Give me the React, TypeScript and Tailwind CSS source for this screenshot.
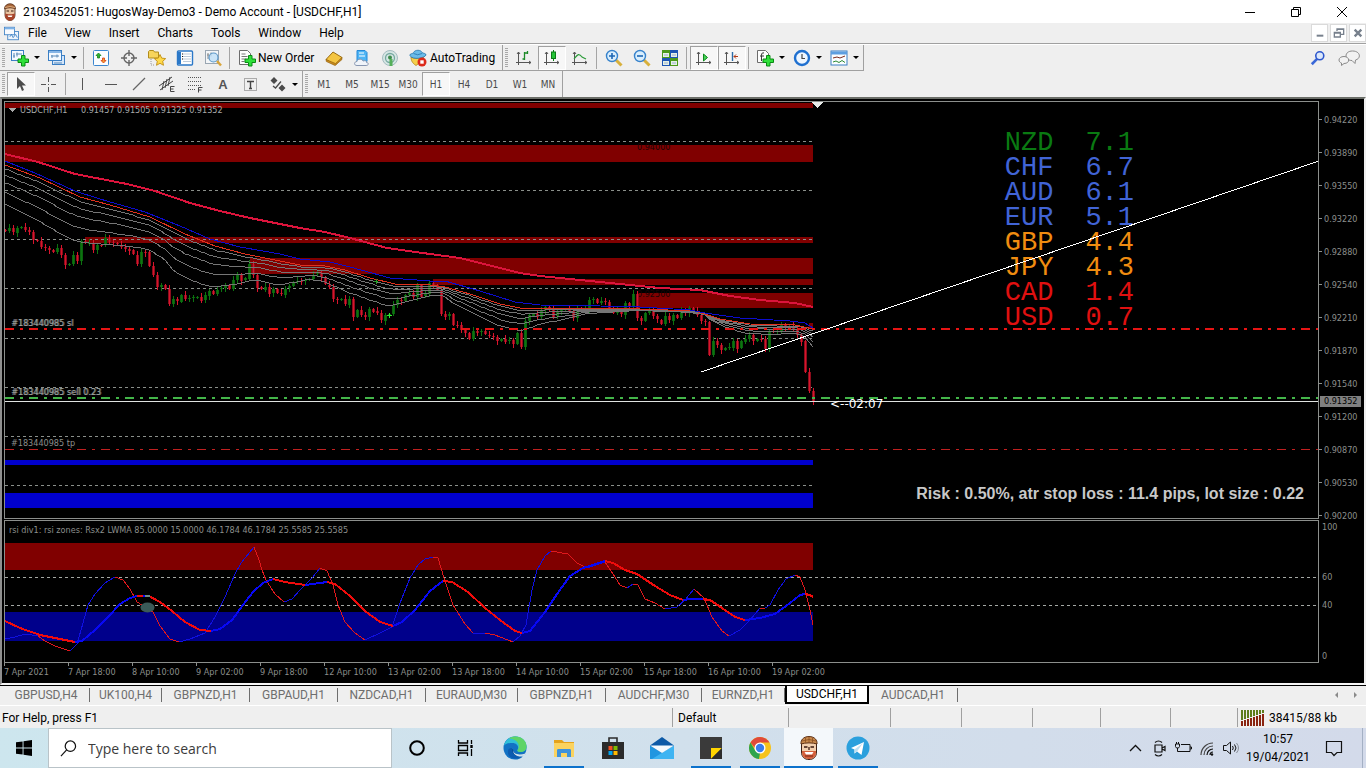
import type { ReactNode } from "react";
import { clsx } from "clsx";

type Point = [number, number];

interface Run {
  color: "red" | "blue";
  points: Point[];
}

const MENU = ["File", "View", "Insert", "Charts", "Tools", "Window", "Help"];
const TIMEFRAMES = ["M1", "M5", "M15", "M30", "H1", "H4", "D1", "W1", "MN"];

const PRICES = [
  "0.94220", "0.93890", "0.93550", "0.93220", "0.92880", "0.92540", "0.92210",
  "0.91870", "0.91540", "0.91200", "0.90870", "0.90530", "0.90200",
];

const TIMES = [
  "7 Apr 2021", "7 Apr 18:00", "8 Apr 10:00", "9 Apr 02:00", "9 Apr 18:00",
  "12 Apr 10:00", "13 Apr 02:00", "13 Apr 18:00", "14 Apr 10:00",
  "15 Apr 02:00", "15 Apr 18:00", "16 Apr 10:00", "19 Apr 02:00",
];

const STRENGTH = [
  { code: "NZD", value: "7.1", color: "text-[#0a7a12]" },
  { code: "CHF", value: "6.7", color: "text-[#4164d6]" },
  { code: "AUD", value: "6.1", color: "text-[#4164d6]" },
  { code: "EUR", value: "5.1", color: "text-[#4164d6]" },
  { code: "GBP", value: "4.4", color: "text-[#f08c10]" },
  { code: "JPY", value: "4.3", color: "text-[#f08c10]" },
  { code: "CAD", value: "1.4", color: "text-[#e01010]" },
  { code: "USD", value: "0.7", color: "text-[#e01010]" },
];

const TABS = [
  { name: "GBPUSD,H4", width: "w-[87px]" },
  { name: "UK100,H4", width: "w-[72px]" },
  { name: "GBPNZD,H1", width: "w-[88px]" },
  { name: "GBPAUD,H1", width: "w-[88px]" },
  { name: "NZDCAD,H1", width: "w-[88px]" },
  { name: "EURAUD,M30", width: "w-[92px]" },
  { name: "GBPNZD,H1", width: "w-[88px]" },
  { name: "AUDCHF,M30", width: "w-[96px]" },
  { name: "EURNZD,H1", width: "w-[83px]" },
  { name: "USDCHF,H1", width: "w-[84px]", active: true },
  { name: "AUDCAD,H1", width: "w-[89px]" },
];

// Hourly closes, one bar every 4px, in thirds of a pixel down from the chart window
const CLOSES = [
  400, 391, 403, 389, 387, 396, 403, 427, 430, 447, 449, 455, 461, 449, 470, 499, 497, 470, 489, 430,
  436, 435, 455, 440, 442, 421, 432, 436, 440, 446, 452, 457, 470, 497, 461, 463, 505, 532, 568, 562,
  574, 618, 603, 610, 590, 601, 600, 598, 596, 608, 592, 578, 587, 575, 571, 562, 573, 545, 530, 547,
  541, 497, 530, 568, 575, 566, 587, 574, 586, 590, 572, 565, 552, 548, 549, 546, 543, 530, 526, 538,
  560, 566, 603, 607, 604, 620, 603, 656, 635, 650, 657, 632, 640, 646, 668, 650, 648, 622, 606, 608,
  590, 585, 597, 560, 595, 588, 556, 561, 575, 647, 655, 648, 680, 682, 697, 705, 723, 698, 704, 700,
  710, 713, 717, 728, 722, 730, 727, 738, 706, 749, 670, 652, 647, 655, 635, 627, 635, 655, 640, 636,
  634, 640, 660, 630, 640, 635, 606, 604, 615, 610, 613, 630, 645, 640, 650, 614, 625, 588, 660, 668,
  645, 640, 655, 665, 678, 655, 668, 650, 660, 640, 645, 630, 640, 652, 670, 672, 772, 730, 742, 757,
  750, 748, 728, 752, 730, 722, 710, 728, 722, 722, 752, 700, 702, 700, 682, 690, 685, 695, 710, 730,
  822, 880, 912,
];

const SLOW_MA: Point[] = [
  [5, 154], [38, 162], [75, 174], [127, 184], [155, 191], [190, 203], [220, 211], [250, 218],
  [280, 224], [300, 228], [325, 232], [350, 238], [387, 248], [430, 254], [460, 258], [480, 263],
  [520, 273], [540, 276], [600, 282], [660, 288], [700, 290], [730, 296], [760, 300], [795, 303],
  [813, 307],
];

const BLUE_MA: Point[] = [
  [5, 161], [35, 173], [75, 191], [100, 199], [145, 212], [180, 226], [210, 239], [240, 247],
  [280, 254], [300, 259], [330, 262], [350, 267], [390, 278], [430, 281], [445, 281], [480, 291],
  [515, 302], [540, 305], [600, 306], [640, 307], [690, 310], [705, 313], [740, 318], [790, 321],
  [805, 323], [813, 328],
];

const FAN_TOP: Point[] = [
  [5, 165], [40, 178], [80, 197], [110, 205], [150, 217], [185, 234], [215, 246], [245, 254],
  [280, 261], [300, 265], [325, 266], [345, 270], [370, 278], [395, 284], [430, 285], [445, 287],
  [470, 294], [500, 304], [520, 308], [560, 308], [640, 309], [695, 311], [720, 319], [750, 324],
  [795, 325], [813, 329],
];

const FAN_BOTTOM: Point[] = [
  [5, 204], [35, 219], [70, 239], [82, 242], [130, 246], [150, 250], [165, 260], [175, 272],
  [190, 280], [212, 287], [235, 284], [255, 280], [265, 282], [280, 285], [310, 279], [325, 282],
  [350, 293], [385, 305], [395, 305], [420, 298], [440, 294], [455, 304], [480, 317], [500, 326],
  [520, 331], [535, 326], [545, 323], [570, 318], [590, 313], [640, 310], [690, 312], [705, 315],
  [710, 320], [725, 327], [745, 333], [770, 334], [795, 333], [805, 337], [813, 347],
];

const RSI_FAST: Run[] = [
  { color: "blue", points: [[5, 639], [15, 637], [25, 634], [38, 636]] },
  { color: "red", points: [[38, 636], [45, 641], [55, 646], [70, 651]] },
  { color: "blue", points: [[70, 651], [77, 644], [83, 623], [88, 605], [95, 594], [105, 583], [115, 577]] },
  { color: "red", points: [[115, 577], [123, 580], [130, 589], [137, 602], [147, 608], [153, 612], [160, 626], [170, 639], [179, 642]] },
  { color: "blue", points: [[179, 642], [190, 639], [205, 633], [215, 617], [225, 597], [235, 574], [241, 563], [254, 547]] },
  { color: "red", points: [[254, 547], [259, 560], [262, 570], [266, 580], [275, 594], [284, 602]] },
  { color: "blue", points: [[284, 602], [292, 599], [300, 590], [312, 578], [320, 568]] },
  { color: "red", points: [[320, 568], [327, 571], [333, 585], [338, 605], [345, 622], [355, 633], [365, 640]] },
  { color: "blue", points: [[365, 640], [380, 633], [392, 627], [400, 603], [410, 578], [418, 565], [425, 559], [433, 557]] },
  { color: "red", points: [[433, 557], [438, 558], [444, 578], [453, 605], [465, 624], [473, 633]] },
  { color: "blue", points: [[473, 633], [485, 633]] },
  { color: "red", points: [[485, 633], [495, 635], [513, 642]] },
  { color: "blue", points: [[513, 642], [520, 636], [526, 625], [532, 590], [537, 570], [545, 556], [551, 551]] },
  { color: "red", points: [[551, 551], [568, 554], [577, 563], [587, 568]] },
  { color: "blue", points: [[587, 568], [605, 562]] },
  { color: "red", points: [[605, 562], [613, 574], [620, 585], [627, 588]] },
  { color: "blue", points: [[627, 588], [633, 584]] },
  { color: "red", points: [[633, 584], [638, 585], [645, 599], [655, 603], [665, 609]] },
  { color: "blue", points: [[665, 609], [677, 607], [685, 600], [694, 589]] },
  { color: "red", points: [[694, 589], [704, 598], [712, 617], [722, 631], [729, 636]] },
  { color: "blue", points: [[729, 636], [740, 630], [750, 620], [760, 608]] },
  { color: "red", points: [[760, 608], [765, 608]] },
  { color: "blue", points: [[765, 608], [770, 605], [778, 590], [786, 579], [795, 575]] },
  { color: "red", points: [[795, 575], [800, 577], [805, 590], [810, 610], [813, 625]] },
];

const RSI_SLOW: Run[] = [
  { color: "red", points: [[5, 621], [20, 628], [40, 635], [60, 639], [75, 642]] },
  { color: "blue", points: [[75, 642], [82, 641], [95, 630], [108, 617], [120, 604], [130, 598], [137, 596]] },
  { color: "red", points: [[137, 596], [143, 596]] },
  { color: "blue", points: [[143, 596], [149, 596]] },
  { color: "red", points: [[149, 596], [160, 602], [172, 611], [185, 622], [200, 630], [211, 631]] },
  { color: "blue", points: [[211, 631], [220, 629], [232, 620], [243, 605], [253, 592], [263, 583], [273, 579]] },
  { color: "red", points: [[273, 579], [285, 582], [305, 585]] },
  { color: "blue", points: [[305, 585], [320, 583], [327, 582]] },
  { color: "red", points: [[327, 582], [335, 584], [350, 596], [365, 611], [380, 622], [393, 626]] },
  { color: "blue", points: [[393, 626], [402, 622], [415, 610], [430, 591], [443, 581]] },
  { color: "red", points: [[443, 581], [452, 582], [468, 592], [485, 608], [500, 620], [515, 631], [522, 633]] },
  { color: "blue", points: [[522, 633], [530, 631], [545, 612], [557, 594], [570, 576], [583, 568], [605, 561]] },
  { color: "red", points: [[605, 561], [613, 563], [625, 570], [637, 574], [655, 586], [670, 595], [683, 600]] },
  { color: "blue", points: [[683, 600], [692, 599], [703, 599]] },
  { color: "red", points: [[703, 599], [710, 600], [722, 608], [735, 617], [745, 620]] },
  { color: "blue", points: [[745, 620], [760, 618], [775, 614], [790, 603], [800, 595], [805, 594]] },
  { color: "red", points: [[805, 594], [810, 595], [813, 597]] },
];

const join = (points: Point[]) => points.map((p) => p.join(",")).join(" ");

function valueAt(points: Point[], x: number) {
  const i = Math.max(1, points.findIndex((p) => p[0] >= x));
  const [x0, y0] = points[i - 1];
  const [x1, y1] = points[i];
  return y0 + ((y1 - y0) * (x - x0)) / (x1 - x0);
}

function between(ratio: number): Point[] {
  const out: Point[] = [];
  for (let x = 5; x <= 813; x += 4) {
    const top = valueAt(FAN_TOP, x);
    out.push([x, Math.round(top + (valueAt(FAN_BOTTOM, x) - top) * ratio)]);
  }
  return out;
}

function Candles() {
  return (
    <>
      {CLOSES.map((c, i) => {
        const open = 98 + (i === 0 ? 396 : CLOSES[i - 1]) / 3;
        const close = 98 + c / 3;
        const up = close < open;
        const top = Math.round(Math.min(open, close));
        const height = Math.max(1, Math.round(Math.abs(open - close)));
        const above = 1 + ((i * 7) % 4);
        const below = 1 + ((i * 5) % 4);
        const x = 5 + i * 4;
        return (
          <g key={i}>
            <rect x={x - 1} y={top} width={3} height={height} fill={up ? "#0a620c" : "#8c0d1c"} />
            <rect x={x} y={top - above} width={1} height={height + above + below} fill={up ? "#0c7410" : "#d8142c"} />
          </g>
        );
      })}
    </>
  );
}

/* ---------- main price pane ---------- */

function PricePlot() {
  return (
    <svg className="absolute inset-0 h-full w-full overflow-hidden" shapeRendering="crispEdges" aria-label="USDCHF price">
      <g transform="translate(-5 -102)">
        <g fill="#800000">
          <rect x={5} y={103} width={808} height={5} />
          <rect x={5} y={145} width={808} height={17} />
          <rect x={85} y={237} width={728} height={6} />
          <rect x={250} y={258} width={563} height={16} />
          <rect x={433} y={279} width={380} height={6} />
          <rect x={637} y={293} width={176} height={15} />
          <rect x={809} y={323} width={4} height={6} />
        </g>
        <g fill="#0000cd">
          <rect x={5} y={460} width={808} height={5} />
          <rect x={5} y={493} width={808} height={15} />
        </g>
        <g fill="#1c0404" fontSize={9} fontFamily="'DejaVu Sans Condensed', 'DejaVu Sans', sans-serif">
          <text x={637} y={150}>0.94000</text>
          <text x={637} y={297}>0.92500</text>
        </g>
        <g stroke="#8a8f8a" strokeDasharray="3 3">
          {[141, 190, 239, 288, 338, 387, 436, 485].map((y) => (
            <line key={y} x1={5} x2={813} y1={y + 0.5} y2={y + 0.5} />
          ))}
        </g>
        <Candles />
        <g fill="none">
          {[0.1, 0.26, 0.45, 0.7, 1].map((r) => (
            <polyline key={r} points={join(between(r))} stroke="#757575" />
          ))}
          <polyline points={join(FAN_TOP)} stroke="#e0301c" />
          <polyline points={join(BLUE_MA)} stroke="#0c0cd0" />
          <polyline points={join(SLOW_MA)} stroke="#dc143c" strokeWidth={2} />
        </g>
        <path d="M387 315.500h5M389.500 313v5" stroke="#32e632" />
        <path d="M374 281.500h4M376.500 279v5" stroke="#22a022" />
        <line x1={5} x2="120%" y1={329} y2={329} stroke="#e81414" strokeWidth={2} strokeDasharray="9 6 3 6" />
        <line x1={5} x2="120%" y1={398} y2={398} stroke="#43b649" strokeWidth={2} strokeDasharray="9 6 3 6" />
        <line x1={5} x2="120%" y1={401.5} y2={401.5} stroke="#dfe2e0" />
        <line x1={5} x2="120%" y1={449.5} y2={449.5} stroke="#c02020" strokeDasharray="9 6 3 6" />
        <line x1={701} y1={372} x2={1319} y2={161} stroke="#ffffff" />
        <path d="M812 102h11l-5.500 6z" fill="#e8ecea" />
        <path d="M8 108h8l-4 4z" fill="#a9a9a9" />
      </g>
    </svg>
  );
}

function PricePane() {
  return (
    <div className="flex">
      <div className="relative h-[418px] flex-1 border border-[#8c8f8c]">
        <table className="absolute top-[29px] right-[184px] font-['Liberation_Mono',monospace] text-[27px] leading-[25px]">
          <tbody>
            {STRENGTH.map((s) => (
              <tr key={s.code} className={clsx("h-[25px]", s.color)}>
                <th scope="row" className="p-0 pr-8 font-normal">{s.code}</th>
                <td className="p-0">{s.value}</td>
              </tr>
            ))}
          </tbody>
        </table>
        <PricePlot />
        <p className="absolute top-[2px] left-[15px] flex text-[#a9a9a9]">
          <span className="w-[61px]">USDCHF,H1</span>
          <span>0.91457 0.91505 0.91325 0.91352</span>
        </p>
        <p className="absolute top-[215px] left-[6px] text-[#a0a4a0] [text-shadow:1px_0_#6c706c]">#183440985 sl</p>
        <p className="absolute top-[284px] left-[6px] text-[#a0a4a0] [text-shadow:1px_0_#6c706c]">#183440985 sell 0.23</p>
        <p className="absolute top-[335px] left-[6px] text-[#8c8f8c]">#183440985 tp</p>
        <p className="absolute top-[294px] left-[825px] font-['DejaVu_Sans',sans-serif] text-xs leading-4 text-white">&lt;--02:07</p>
        <p className="absolute right-[14px] bottom-[14px] font-['Liberation_Sans',Arial,sans-serif] text-base leading-5 font-bold text-[#c8c8c8]">
          Risk : 0.50%, atr stop loss : 11.4 pips, lot size : 0.22
        </p>
      </div>
      <div className="relative w-[45px] text-[#8c8f8c]">
        <ul className="flex h-[418px] flex-col pt-[2px]">
          {PRICES.map((p) => (
            <li key={p} className="flex h-[33px] shrink-0 items-center gap-[2px] before:h-px before:w-[3px] before:bg-[#8c8f8c]">
              {p}
            </li>
          ))}
        </ul>
        <span className="absolute top-[295px] left-px h-[11px] bg-[#808080] px-1 leading-[11px] text-black">0.91352</span>
      </div>
    </div>
  );
}

/* ---------- rsi pane ---------- */

function RsiPane() {
  return (
    <div className="mt-px flex">
      <div className="relative h-[143px] flex-1 border border-[#8c8f8c]">
        <svg className="absolute inset-0 h-full w-full overflow-hidden" shapeRendering="crispEdges" aria-label="RSI zones">
          <g transform="translate(-5 -521)">
            <rect x={5} y={543} width={808} height={27} fill="#800000" />
            <rect x={5} y={612} width={808} height={29} fill="#00008b" />
            <g stroke="#a4a8a4" strokeDasharray="3 3">
              <line x1={5} x2="120%" y1={577.5} y2={577.5} />
              <line x1={5} x2="120%" y1={605.5} y2={605.5} />
            </g>
            <g fill="none">
              {RSI_FAST.map((r, i) => (
                <polyline key={i} points={join(r.points)} stroke={r.color === "red" ? "#e0181c" : "#1010e0"} />
              ))}
              {RSI_SLOW.map((r, i) => (
                <polyline key={i} points={join(r.points)} stroke={r.color === "red" ? "#f00c0c" : "#0808f4"} strokeWidth={2} />
              ))}
            </g>
            <path d="M145 596h5" stroke="#6f8a8a" strokeWidth={2} />
            <ellipse cx={147.5} cy={607.5} rx={7} ry={5} fill="#3a5a58" shapeRendering="auto" />
          </g>
        </svg>
        <p className="absolute top-[3px] left-1 text-[#8c8f8c]">
          rsi div1: rsi zones: Rsx2 LWMA 85.0000 15.0000 46.1784 46.1784 25.5585 25.5585
        </p>
      </div>
      <ul className="w-[45px] pt-px pl-[3px] text-[#8c8f8c]">
        <li>100</li>
        <li className="pt-[38px]">60</li>
        <li className="pt-4">40</li>
        <li className="pt-[39px]">0</li>
      </ul>
    </div>
  );
}

function Chart() {
  return (
    <main className="flex-1 border-2 border-t-[#6b6e68] border-r-[#efefef] border-b-[#f6f6f6] border-l-[#8f8f8f] bg-black pt-[2px] pl-[2px] font-['DejaVu_Sans_Condensed','DejaVu_Sans',sans-serif] text-[9px] leading-3">
      <PricePane />
      <RsiPane />
      <ol className="flex h-[20px] text-[#8c8f8c]">
        {TIMES.map((t) => (
          <li key={t} className="flex w-16 shrink-0 flex-col whitespace-nowrap before:h-[3px] before:w-px before:bg-[#8c8f8c]">
            {t}
          </li>
        ))}
      </ol>
    </main>
  );
}

/* ---------- icons ---------- */

function Icon({ children, size = "h-[18px] w-[18px]" }: { children: ReactNode; size?: string }) {
  return (
    <svg viewBox="0 0 18 18" className={clsx("shrink-0", size)} fill="none" aria-hidden="true">
      {children}
    </svg>
  );
}

const Plus = () => <path d="M10.500 6.500h3.500v3.500h3.500v3.500H14V17h-3.500v-3.500H7V10h3.500z" fill="#2fe03a" stroke="#0a8a14" />;

const Hugo = ({ size }: { size?: string }) => (
  <Icon size={size}>
    <path d="M4 5c0-5 10-5 10 0v7c0 3-2 5.500-5 5.500S4 15 4 12z" fill="#e9c4a2" stroke="#4a2413" strokeWidth=".8" />
    <path d="M3.500 6c0-7 11-7 11 0-3-1.500-8-1.500-11 0z" fill="#a8663a" stroke="#4a2614" strokeWidth=".6" />
    <path d="M4 4.500q5-2 10 0" stroke="#d9a878" />
    <path d="M4.200 10.500c1.500 1 8 1 9.600 0v2c0 3-2 5-4.800 5s-4.800-2-4.800-5z" fill="#a8432a" />
    <path d="M6.500 12.500h5l-.8 1.500H7.300z" fill="#fff" />
    <path d="M5.500 8h2.500M10 8h2.500" stroke="#3a1a10" strokeWidth="1.200" />
  </Icon>
);

const ICONS = {
  newChart: (
    <Icon>
      <rect x=".5" y="1.500" width="12" height="10" fill="#f4f9ff" stroke="#3b7fc4" />
      <path d="M3 4v5M2 7h2M6 3.500v4M5 5h6" stroke="#5a8ab8" />
      <Plus />
    </Icon>
  ),
  profiles: (
    <Icon>
      <rect x="4.500" y="6.500" width="12" height="9" fill="#d4e6fa" stroke="#3b7fc4" />
      <rect x=".5" y="1.500" width="13" height="10" fill="#f4f9ff" stroke="#3b7fc4" />
      <path d="M1 3h12" stroke="#86b5e6" strokeWidth="2" />
      <path d="M3 7h8M4 6v3M9 5.500v3M6 14h8" stroke="#5a8ab8" />
    </Icon>
  ),
  market: (
    <Icon>
      <rect x="1.500" y="1.500" width="15" height="15" rx="1" fill="#fbfdff" stroke="#3b86cf" />
      <path d="M6.500 4l2.500 2.500H7.500V9h-2V6.500H4z" fill="#2fb52f" stroke="#14801a" strokeWidth=".8" />
      <path d="M11.500 14L9 11.500h1.500V9h2v2.500H14z" fill="#f4a035" stroke="#d8380c" strokeWidth=".8" />
    </Icon>
  ),
  target: (
    <Icon>
      <circle cx="9" cy="9" r="5" stroke="#666" strokeWidth="1.400" />
      <path d="M9 1v6M9 11v6M1 9h6M11 9h6" stroke="#666" strokeWidth="1.400" />
    </Icon>
  ),
  star: (
    <Icon>
      <path d="M.5 2.500l1-1h4l1 1.500h4v6h-10z" fill="#f7d45c" stroke="#b08c1c" />
      <path d="M3 10v6h3" stroke="#999" strokeDasharray="1 1" />
      <path d="M12 5.500l1.700 3.600 4 .5-3 2.700.8 4-3.500-2-3.500 2 .8-4-3-2.700 4-.5z" fill="#ffd94a" stroke="#c18f12" strokeWidth=".9" />
    </Icon>
  ),
  navigator: (
    <Icon>
      <rect x="1.500" y="2" width="15" height="14" rx="1" fill="#fff" stroke="#2b78c8" strokeWidth="1.400" />
      <path d="M3.500 3v12" stroke="#2b78c8" strokeWidth="3" />
      <path d="M7 5h8M7 7.500h8M7 10h8M7 12.500h8" stroke="#bccada" />
      <path d="M6 5h1M6 7.500h1M6 10h1" stroke="#111" />
    </Icon>
  ),
  tester: (
    <Icon>
      <rect x="1.500" y="1.500" width="13" height="13" fill="#f4f6f8" stroke="#9aa6b2" />
      <path d="M4 4v6M3 6h2M7 3.500v4" stroke="#888" />
      <circle cx="9.500" cy="8.500" r="4.500" fill="#bfe0f7cc" stroke="#5c98c8" strokeWidth="1.200" />
      <path d="M13 12l4 4.500" stroke="#d9a53a" strokeWidth="2.400" />
    </Icon>
  ),
  order: (
    <Icon>
      <path d="M1.500 1.500h8l3 3v11h-11z" fill="#fdfdfd" stroke="#6c6c6c" />
      <path d="M3.500 5h4M3.500 7.500h6M3.500 10h4M3.500 12.500h3" stroke="#777" />
      <Plus />
    </Icon>
  ),
  book: (
    <Icon>
      <path d="M1 10.500L8 3l9 5.500L10.500 16z" fill="#f4c542" stroke="#9a6c12" />
      <path d="M1 10.500l.3 2L10 16.500l7-6v-2l-6.500 6z" fill="#c98c1c" stroke="#8d5d0e" strokeWidth=".6" />
    </Icon>
  ),
  cloud: (
    <Icon>
      <path d="M4 1.500h8l2 2v9H4z" fill="#4fb5f4" stroke="#2488d8" />
      <path d="M6 4h5M6 7h6" stroke="#fff" />
      <path d="M4 16.500c-3.500 0-3-4 0-4 .5-3 5-3 6-.5 3-1 4 .5 3.500 1.500 3 .5 2 3-.5 3z" fill="#f0f4fa" stroke="#8896b0" />
    </Icon>
  ),
  signal: (
    <Icon>
      <circle cx="9" cy="9" r="7.500" fill="#d6e6e4" stroke="#a3bcc0" />
      <circle cx="9" cy="9" r="4.500" stroke="#76a9a0" strokeWidth="1.300" />
      <circle cx="9" cy="8.500" r="2" fill="#3c8c4c" />
      <path d="M10 10v7" stroke="#55b05a" strokeWidth="3" />
    </Icon>
  ),
  auto: (
    <Icon>
      <path d="M2 8c3 2 10 2 13-1l-2 5-6 4.500C3 14 2 11 2 8z" fill="#f5cf4b" stroke="#b0871a" strokeWidth=".8" />
      <path d="M.8 6.500C1 4 4 5 4.500 3.500 6 .5 12 .5 13 3.500c1 1 4 .5 4 2.500-1 3-13 5.500-16.200.5z" fill="#6abbe8" stroke="#2575ac" strokeWidth=".8" />
      <path d="M4.500 4.500q4 2.500 8.500 0" stroke="#2575ac" strokeWidth=".8" />
      <circle cx="13" cy="13" r="4.500" fill="#dc2a1c" />
      <rect x="11.300" y="11.300" width="3.400" height="3.400" fill="#fff" />
    </Icon>
  ),
  bars: (
    <Icon>
      <path d="M3.500 3v13M1 13.500h15M2 5l1.500-2L5 5M14 12l2 1.500-2 1.500" stroke="#555" />
      <path d="M9.500 3v8M9.500 4h3M7.500 10h2M12.500 2v3" stroke="#1c8a28" strokeWidth="1.300" />
    </Icon>
  ),
  candles: (
    <Icon>
      <path d="M3.500 3v13M1 13.500h15M2 5l1.500-2L5 5M14 12l2 1.500-2 1.500" stroke="#555" />
      <path d="M10.500 1v11" stroke="#0b7a16" />
      <rect x="8.500" y="3" width="4" height="6.500" fill="#25c437" stroke="#0b7a16" />
    </Icon>
  ),
  line: (
    <Icon>
      <path d="M3.500 3v13M1 13.500h15M2 5l1.500-2L5 5M14 12l2 1.500-2 1.500" stroke="#555" />
      <path d="M3 10c4-5 5-6 8-2l4 2" stroke="#2c9c3a" strokeWidth="1.200" />
    </Icon>
  ),
  zoomIn: (
    <Icon>
      <path d="M11 11l5.500 5.500" stroke="#d8b03c" strokeWidth="3" />
      <circle cx="7" cy="7" r="5.500" fill="#d9eefd" stroke="#3682cc" strokeWidth="1.400" />
      <path d="M4 7h6M7 4v6" stroke="#1d66b4" strokeWidth="1.600" />
    </Icon>
  ),
  zoomOut: (
    <Icon>
      <path d="M11 11l5.500 5.500" stroke="#d8b03c" strokeWidth="3" />
      <circle cx="7" cy="7" r="5.500" fill="#d9eefd" stroke="#3682cc" strokeWidth="1.400" />
      <path d="M4 7h6" stroke="#1d66b4" strokeWidth="1.600" />
    </Icon>
  ),
  tiles: (
    <Icon>
      <path d="M1 1h8v8H1zM9 9h8v8H9z" fill="#4b9a1c" />
      <path d="M9 1h8v8H9zM1 9h8v8H1z" fill="#1d56b4" />
      <path d="M2 4h6v4H2zM10 4h6v4h-6zM2 12h6v4H2zM10 12h6v4h-6z" fill="#e6f1e6" />
      <path d="M3 6h4M11 6h4M3 14h4M11 14h4" stroke="#9ab0d0" />
    </Icon>
  ),
  scroll: (
    <Icon>
      <path d="M3.500 3v13M1 13.500h15M2 5l1.500-2L5 5M14 12l2 1.500-2 1.500" stroke="#555" />
      <path d="M8.500 5l4 3.500-4 3.500z" fill="#45d055" stroke="#0d8a1c" />
    </Icon>
  ),
  shift: (
    <Icon>
      <path d="M3.500 3v13M1 13.500h15M2 5l1.500-2L5 5M14 12l2 1.500-2 1.500" stroke="#555" />
      <path d="M9.500 3v9" stroke="#2a6aa8" strokeWidth="1.400" />
      <path d="M15 7.500h-4M13 5.500l-2 2 2 2" stroke="#b03a18" />
    </Icon>
  ),
  indicators: (
    <Icon>
      <path d="M1.500 1.500h8l3 3v9h-11z" fill="#fdfdfd" stroke="#6c6c6c" />
      <path d="M8 4c-3-1-2.500 2-2.500 8M4 7h4" stroke="#333" />
      <Plus />
    </Icon>
  ),
  clock: (
    <Icon>
      <circle cx="9" cy="9" r="7" fill="#eef6ff" stroke="#1f70d0" strokeWidth="2.400" />
      <path d="M9 5v4.500h3" stroke="#444" strokeWidth="1.200" />
    </Icon>
  ),
  template: (
    <Icon>
      <rect x="1" y="2" width="16" height="14" fill="#fbfdff" stroke="#3b7fc4" />
      <path d="M1 4h16" stroke="#5c9ee0" strokeWidth="3" />
      <path d="M3 9l4-1 3 1 5-2" stroke="#7a2a1c" />
      <path d="M3 13l3-1 3 1.500 3-2 3 2" stroke="#2b8a34" />
    </Icon>
  ),
  cursor: (
    <Icon>
      <path d="M5 2v12l3-3 2 5 2-1-2-4.500h4z" fill="#4c4c4c" />
    </Icon>
  ),
  cross: (
    <Icon>
      <path d="M8.500 2v5M8.500 12v5M1 9.500h5M11 9.500h5" stroke="#555" />
      <path d="M8 9.500h1" stroke="#555" />
    </Icon>
  ),
  vline: <Icon><path d="M8.500 3v12" stroke="#555" /></Icon>,
  hline: <Icon><path d="M3 9.500h12" stroke="#555" /></Icon>,
  trend: <Icon><path d="M3 15L15 3" stroke="#666" strokeWidth="1.200" /></Icon>,
  channel: (
    <Icon>
      <path d="M1 11L14 2M2 15L15 6M4 15l2-9M7 13l2-9M10 11l2-9" stroke="#444" />
      <path d="M16.500 11.500h-4v5h4M12.500 14h3" stroke="#444" />
    </Icon>
  ),
  fibo: (
    <Icon>
      <path d="M2 2.500h14M2 6.500h14M2 10.500h14M2 14.500h8" stroke="#555" strokeDasharray="1 1" />
      <path d="M16.500 12.500h-4v5M12.500 15h3" stroke="#444" />
    </Icon>
  ),
  label: (
    <Icon>
      <rect x="2.500" y="3.500" width="12" height="12" stroke="#666" strokeDasharray="1 1" />
      <path d="M5 6.500h7M8.500 6.500V14M7 13.500h3" stroke="#444" strokeWidth="1.400" />
    </Icon>
  ),
  arrows: (
    <Icon>
      <path d="M5 2l3.500 3.500L5 9 1.500 5.500zM13 9.500l3.500 3.500-3.500 3.500L9.500 13z" fill="#4a4a4a" />
      <path d="M4 11l2.500 2L12 6.500" stroke="#4a4a4a" strokeWidth="1.300" />
    </Icon>
  ),
};

/* ---------- window chrome ---------- */

function Tool({ label, pressed, children }: { label: string; pressed?: boolean; children: ReactNode }) {
  return (
    <button
      type="button"
      aria-label={label}
      className={clsx(
        "flex h-6 w-7 items-center justify-center",
        pressed && "border border-t-[#a0a0a0] border-r-white border-b-white border-l-[#a0a0a0] bg-[#f7f7f7]"
      )}
    >
      {children}
    </button>
  );
}

function DropTool({ label, children }: { label: string; children: ReactNode }) {
  return (
    <button type="button" aria-label={label} className="flex h-6 w-[37px] items-center justify-center gap-[5px]">
      {children}
      <Caret />
    </button>
  );
}

const Caret = () => <span className="border-x-[3px] border-t-[3px] border-x-transparent border-t-black" />;
const Sep = () => <span className="mx-[2px] h-[22px] w-[2px] border-l border-[#a5a5a5]" />;
const Grip = () => (
  <span className="mx-[2px] h-5 w-[3px] bg-[repeating-linear-gradient(to_bottom,#a8a8a8_0_1px,#efefef_1px_2px)]" />
);

function TitleBar() {
  return (
    <header className="flex h-[23px] items-center bg-white pl-px">
      <Hugo />
      <h1 className="ml-1 text-xs">2103452051: HugosWay-Demo3 - Demo Account - [USDCHF,H1]</h1>
      <div className="ml-auto flex">
        <button type="button" aria-label="Minimize" className="flex w-[46px] justify-center">
          <Icon><path d="M4 9.500h10" stroke="#000" shapeRendering="crispEdges" /></Icon>
        </button>
        <button type="button" aria-label="Restore" className="flex w-[45px] justify-center">
          <Icon>
            <path d="M4.500 6.500h7v7h-7zM6.500 6V4.500h7v7H12" stroke="#000" />
          </Icon>
        </button>
        <button type="button" aria-label="Close" className="flex w-12 justify-center">
          <Icon><path d="M4 4l10 10M14 4L4 14" stroke="#000" /></Icon>
        </button>
      </div>
    </header>
  );
}

function MenuBar() {
  const box = "flex h-[18px] w-[17px] items-center justify-center border border-[#dadada] bg-white";
  return (
    <nav className="flex h-[21px] items-center border-b border-[#a0a0a0] pl-1 text-xs">
      <Icon size="h-[15px] w-[15px]">
        <rect x="4.500" y="6.500" width="13" height="10" fill="#eef5fd" stroke="#3b7fc4" />
        <rect x=".5" y="1.500" width="12" height="9" fill="#f8fbff" stroke="#3b7fc4" />
        <path d="M1 3h12" stroke="#7eb2e8" strokeWidth="2" />
        <path d="M7 13l2-3 2 4 3-4 2 4" stroke="#3b7fc4" />
      </Icon>
      {MENU.map((m) => (
        <button key={m} type="button" className="px-[9px]">{m}</button>
      ))}
      <div className="ml-auto flex gap-[2px]">
        <button type="button" aria-label="Minimize chart" className={box}>
          <Icon size="h-3 w-3"><path d="M4 13h10" stroke="#77808c" strokeWidth="3" /></Icon>
        </button>
        <button type="button" aria-label="Restore chart" className={box}>
          <Icon size="h-3 w-3"><path d="M2 8h9v7H2zM6 6V3h10v8h-4M6 3.500h10M2 9h9" stroke="#77808c" strokeWidth="2" /></Icon>
        </button>
        <button type="button" aria-label="Close chart" className={box}>
          <Icon size="h-3 w-3"><path d="M4 4l10 10M14 4L4 14" stroke="#77808c" strokeWidth="3.500" /></Icon>
        </button>
      </div>
    </nav>
  );
}

function MainToolbar() {
  return (
    <div className="flex h-[27px] items-center border-t border-t-white">
      <div className="flex h-[26px] items-center border-r border-b border-[#a0a0a0]">
        <Grip />
        <DropTool label="New chart">{ICONS.newChart}</DropTool>
        <DropTool label="Profiles">{ICONS.profiles}</DropTool>
        <Sep />
        <Tool label="Market Watch">{ICONS.market}</Tool>
        <Tool label="Data Window">{ICONS.target}</Tool>
        <Tool label="Navigator">{ICONS.star}</Tool>
        <Tool label="Terminal">{ICONS.navigator}</Tool>
        <Tool label="Strategy Tester">{ICONS.tester}</Tool>
        <Sep />
        <button type="button" className="flex h-6 w-[87px] items-center gap-[2px] pl-[5px] text-xs">
          {ICONS.order}
          <span className="whitespace-nowrap">New Order</span>
        </button>
        <Tool label="MetaEditor">{ICONS.book}</Tool>
        <Tool label="Virtual hosting">{ICONS.cloud}</Tool>
        <Tool label="Signals">{ICONS.signal}</Tool>
        <button type="button" className="flex h-6 w-[98px] items-center gap-[3px] pl-[5px] text-xs">
          {ICONS.auto}
          AutoTrading
        </button>
      </div>
      <div className="flex h-[26px] items-center border-r border-b border-[#a0a0a0]">
        <Grip />
        <Tool label="Bar chart">{ICONS.bars}</Tool>
        <Tool label="Candlesticks" pressed>{ICONS.candles}</Tool>
        <Tool label="Line chart">{ICONS.line}</Tool>
        <Sep />
        <Tool label="Zoom in">{ICONS.zoomIn}</Tool>
        <Tool label="Zoom out">{ICONS.zoomOut}</Tool>
        <Tool label="Tile windows">{ICONS.tiles}</Tool>
        <Sep />
        <Tool label="Auto scroll" pressed>{ICONS.scroll}</Tool>
        <Tool label="Chart shift" pressed>{ICONS.shift}</Tool>
        <Sep />
        <DropTool label="Indicators">{ICONS.indicators}</DropTool>
        <DropTool label="Periods">{ICONS.clock}</DropTool>
        <DropTool label="Templates">{ICONS.template}</DropTool>
      </div>
      <div className="ml-auto flex items-center gap-3 pr-[6px]">
        <button type="button" aria-label="Search">
          <Icon size="h-4 w-4">
            <path d="M2 16l6-6" stroke="#3a68d8" strokeWidth="3" />
            <circle cx="11" cy="6.500" r="4.500" fill="#dce8fb" stroke="#2c56cc" strokeWidth="1.800" />
          </Icon>
        </button>
        <button type="button" aria-label="Community">
          <svg viewBox="0 0 22 16" className="h-4 w-[22px]" fill="#f2f2f2" stroke="#8a8a8a" aria-hidden="true">
            <path d="M14.500 1c-4 0-6.500 2-6.500 5 0 2.500 2.500 4.500 6 4.500l3 3 .5-3.500c6-1.500 5-9-3-9z" />
            <path d="M6 6.500c-3 0-5 1.500-5 3.500 0 1.500 1 2.500 2.500 3v2.500l2.500-2c6.500 0 6-7 0-7z" />
          </svg>
        </button>
      </div>
    </div>
  );
}

function LineToolbar() {
  return (
    <div className="flex h-[26px] items-center">
      <div className="flex h-[26px] items-center border-r border-[#a0a0a0]">
        <Grip />
        <Tool label="Cursor" pressed>{ICONS.cursor}</Tool>
        <Tool label="Crosshair">{ICONS.cross}</Tool>
        <Sep />
        <Tool label="Vertical line">{ICONS.vline}</Tool>
        <Tool label="Horizontal line">{ICONS.hline}</Tool>
        <Tool label="Trendline">{ICONS.trend}</Tool>
        <Tool label="Equidistant channel">{ICONS.channel}</Tool>
        <Tool label="Fibonacci retracement">{ICONS.fibo}</Tool>
        <Tool label="Text">
          <span className="pt-[2px] font-['Liberation_Sans',Arial,sans-serif] text-[13px] font-bold text-[#555]">A</span>
        </Tool>
        <Tool label="Text label">{ICONS.label}</Tool>
        <DropTool label="Arrows">{ICONS.arrows}</DropTool>
      </div>
      <div className="flex h-[26px] items-center border-r border-[#a0a0a0] font-['DejaVu_Sans_Condensed','DejaVu_Sans',sans-serif] text-[10px] text-[#4a4a4a]">
        <Grip />
        {TIMEFRAMES.map((t) => (
          <Tool key={t} label={t} pressed={t === "H1"}>
            <span className="pt-px">{t}</span>
          </Tool>
        ))}
      </div>
    </div>
  );
}

function ChartTabs() {
  return (
    <div className="flex h-[20px] items-start border-t border-black pl-[3px] text-xs text-[#6e6e6e]">
      {TABS.map((t, i) => (
        <button
          key={i}
          type="button"
          className={clsx(
            "flex h-[18px] items-center justify-center whitespace-nowrap",
            t.width,
            t.active
              ? "border-r-2 border-b-2 border-l-2 border-black bg-white text-black"
              : "before:mr-auto after:ml-auto after:h-[14px] after:w-px after:bg-[#6e6e6e]"
          )}
        >
          {t.name}
        </button>
      ))}
      <div className="ml-auto flex h-[17px] items-center gap-4 pr-[9px]">
        <button type="button" aria-label="Scroll left" className="border-y-[3px] border-r-[3px] border-y-transparent border-r-[#8a8a8a]" />
        <button type="button" aria-label="Scroll right" className="border-y-[3px] border-l-[3px] border-y-transparent border-l-[#8a8a8a]" />
      </div>
    </div>
  );
}

function StatusBar() {
  const cell = "flex h-[19px] items-center border-l border-[#a0a0a0]";
  return (
    <footer className="flex h-[23px] items-center border-t border-white pt-px pl-[2px] text-xs">
      <span className="flex-1">For Help, press F1</span>
      <span className={clsx(cell, "w-[116px] pl-[5px]")}>Default</span>
      <span className={clsx(cell, "w-[102px]")} />
      <span className={clsx(cell, "w-[71px]")} />
      <span className={clsx(cell, "w-[71px]")} />
      <span className={clsx(cell, "w-[68px]")} />
      <span className={clsx(cell, "w-[70px]")} />
      <span className={clsx(cell, "w-[67px]")} />
      <span className={clsx(cell, "w-[129px] gap-1 pl-[3px]")}>
        <svg viewBox="0 0 24 16" className="h-4 w-6" aria-hidden="true" shapeRendering="crispEdges">
          {[0, 1, 2, 3, 4, 5, 6, 7].map((i) => (
            <g key={i}>
              <rect x={i * 3} y={0} width={2} height={10 - i} fill="#5e7d1c" />
              <rect x={i * 3} y={11 - i} width={2} height={5 + i} fill="#8a2410" />
            </g>
          ))}
        </svg>
        38415/88 kb
      </span>
    </footer>
  );
}

/* ---------- windows taskbar ---------- */

function TaskButton({ label, open, active, children }: { label: string; open?: boolean; active?: boolean; children: ReactNode }) {
  return (
    <button
      type="button"
      aria-label={label}
      className={clsx("flex h-10 w-[49px] flex-col items-center", active && "bg-[#f4f8fb]")}
    >
      <span className="flex h-[38px] items-center pt-[2px]">
        <svg viewBox="0 0 24 24" className="h-6 w-6" fill="none" aria-hidden="true">{children}</svg>
      </span>
      {open && <span className={clsx("h-[2px] bg-[#0c72cc]", active ? "w-full" : "w-10")} />}
    </button>
  );
}

function Taskbar() {
  return (
    <div className="flex h-10 items-center bg-linear-to-r from-[#cde6ee] via-[#d1e0ec] to-[#d3daea]">
      <button type="button" aria-label="Start" className="flex h-10 w-12 items-center justify-center">
        <svg viewBox="0 0 16 16" className="h-4 w-4" aria-hidden="true">
          <path d="M0 2.300L6.600 1.400v6.200H0zM7.500 1.200L16 0v7.600H7.500zM0 8.400h6.600v6.200L0 13.700zM7.500 8.400H16V16l-8.500-1.200z" />
        </svg>
      </button>
      <label className="flex h-10 w-[344px] items-center gap-[11px] border border-[#b9c3c8] bg-white pl-[11px]">
        <svg viewBox="0 0 18 18" className="h-[17px] w-[17px]" fill="none" stroke="#111" strokeWidth="1.300" aria-hidden="true">
          <circle cx="11" cy="6.500" r="5.500" />
          <path d="M7 10.500L1 17" />
        </svg>
        <input type="text" aria-label="Search" placeholder="Type here to search" className="w-60 pt-px font-['Open_Sans',sans-serif] text-sm outline-none placeholder:text-[#3c3c3c]" />
      </label>
      <TaskButton label="Cortana">
        <circle cx="12" cy="12" r="6.800" stroke="#000" strokeWidth="2" />
      </TaskButton>
      <TaskButton label="Task View">
        <path d="M4.500 4v3h9V4M4.500 20v-3h9v3M4.500 9.500h9v5h-9zM17.500 4v4M17.500 13v7" stroke="#000" strokeWidth="1.300" />
        <path d="M17.500 9v3" stroke="#000" strokeWidth="2.400" />
      </TaskButton>
      <TaskButton label="Edge">
        <circle cx="12" cy="12" r="11.500" fill="#1272c4" />
        <path d="M.8 10C2 3.500 7 .5 12.500.5 19 .5 23.500 5 23.500 10.500c0 4-3 5.500-6 5.500-2.500 0-3.500-1-3-2 2-3-.5-7-5-7S2 8 .8 10z" fill="#2fbfd8" />
        <path d="M12.500.5C19 .5 23.500 5 23.500 10.500c0 4-3 5.500-6 5.500-2.500 0-3.500-1-3-2C18 10 15 3 6 2.500 8 1 10 .5 12.500.5z" fill="#5fd467" />
        <path d="M9 13c0 6 7 8.500 13 5" stroke="#0a4f98" strokeWidth="2" />
        <path d="M10 12.500c-1 5 5 7.500 12 5l3 4c-8 0-16-1-15-9z" fill="#cfe2ee" />
        <path d="M9 12c-1 7 6 11 11.500 7.500C15 25 4 23 5 15c0-2 2-3.500 4-3z" fill="#0d5cb0" />
      </TaskButton>
      <TaskButton label="File Explorer" open>
        <path d="M2 4h8l2 2h10v3H2z" fill="#e5a31c" />
        <path d="M2 7h20v14H2z" fill="#fbd35f" />
        <path d="M5 21v-6.500c0-1 .5-1.500 1.500-1.500h11c1 0 1.500.5 1.500 1.500V21h-4v-4H9v4z" fill="#3e92dc" />
      </TaskButton>
      <TaskButton label="Microsoft Store">
        <path d="M8 7V2h8v5" stroke="#2b2b2b" strokeWidth="1.600" />
        <path d="M1 6h22v17H1z" fill="#2b2b2b" />
        <path d="M7.500 10h4v4h-4z" fill="#f25022" />
        <path d="M12.500 10h4v4h-4z" fill="#7fba00" />
        <path d="M7.500 15h4v4h-4z" fill="#00a4ef" />
        <path d="M12.500 15h4v4h-4z" fill="#ffb900" />
      </TaskButton>
      <TaskButton label="Mail">
        <path d="M0 9.500L12 1l12 8.500V22H0z" fill="#0d5aa7" />
        <path d="M0 9.500L12 17 24 9.500V23H0z" fill="#2196e0" />
        <path d="M24 9.500V23H2z" fill="#3fb4f2" />
        <path d="M0 9.500h24l-12 7.500z" fill="#f4f9fd" />
      </TaskButton>
      <TaskButton label="Sticky Notes" open>
        <path d="M1 1h22v22H1z" fill="#3a3a3a" />
        <path d="M12 12h11l-11 11z" fill="#ffd500" />
        <path d="M23 12v11H12z" fill="#2c2c2c" />
      </TaskButton>
      <TaskButton label="Chrome" open>
        <circle cx="12" cy="12" r="11" fill="#f6c31c" />
        <path d="M2.500 6.500A11 11 0 0 1 21.500 6.500H12L7 12z" fill="#e04a3a" />
        <path d="M2.500 6.500L7.500 15 12 17l-1 6A11 11 0 0 1 2.500 6.500z" fill="#2da44e" />
        <circle cx="12" cy="12" r="5.500" fill="#fff" />
        <circle cx="12" cy="12" r="4.200" fill="#3b7ded" />
      </TaskButton>
      <TaskButton label="MetaTrader 4" open active>
        <path d="M4.500 8c0-8 15-8 15 0v8c0 5-3 7.500-7.500 7.500S4.500 21 4.500 16z" fill="#f2cfae" stroke="#3e2115" />
        <path d="M4 8C3-2 21-2 20 8c-4-1.500-12-1.500-16 0z" fill="#c98a4c" stroke="#5a2f15" />
        <path d="M5 5q7-3 14 0M8.500 1.500v5M12 .5v5.500M15.500 1.500v5" stroke="#8a4f22" strokeWidth=".8" />
        <path d="M5 15q7 0 14 0v1c0 5-3 7-7 7s-7-2-7-7z" fill="#d4603c" />
        <path d="M7.500 16h9l-1.500 2.500H9z" fill="#fff" />
        <path d="M8 20h8" stroke="#7a2414" />
        <path d="M7 11h3.500M13.500 11H17M12 11v3" stroke="#3a1a10" strokeWidth="1.300" />
      </TaskButton>
      <TaskButton label="Telegram" open>
        <circle cx="12" cy="12" r="11.500" fill="#2ba0dd" />
        <path d="M5 12l13-6-2.500 13-4.500-3.500-2.500 2v-4z" fill="#fff" />
        <path d="M8.500 13.500L17 7l-6 8.500-2.500 2z" fill="#bfe0f2" />
      </TaskButton>

      <div className="ml-auto flex items-center gap-[6px]" aria-label="System tray">
        <Icon><path d="M4 12l5.500-5.500L15 12" stroke="#111" strokeWidth="1.300" /></Icon>
        <Icon>
          <path d="M5 6h7v7H5zM12 9l3-1.500v4L12 10M5 3.500q3.500-3 7 0M5 15.500q3.500 3 7 0" stroke="#111" strokeWidth="1.200" />
        </Icon>
        <Icon>
          <path d="M7 5.500h9v7H7M16 8h1.500v2H16M1.500 5h4v2.500l-1 1.500h-2l-1-1.500zM2.500 3v2M4.500 3v2M3.500 9v3.500H7" stroke="#111" />
        </Icon>
        <Icon>
          <path d="M12 16a3 3 0 0 1 3-3M9 16a6 6 0 0 1 6-6" stroke="#111" strokeWidth="1.200" />
          <path d="M6 16a9 9 0 0 1 9-9M3 16A12 12 0 0 1 15 4" stroke="#444" strokeWidth="1.200" />
          <circle cx="14" cy="15.500" r="1.200" fill="#111" />
        </Icon>
        <Icon>
          <path d="M1.500 6.500h3L8.500 3v12l-4-3.500h-3z" stroke="#111" />
          <path d="M10.500 7q1.500 2 0 4M12.500 5.500q3 3.500 0 7" stroke="#111" />
          <path d="M14.500 4q4 5 0 10" stroke="#8a8f98" />
        </Icon>
      </div>
      <time className="w-[76px] text-center text-xs leading-[18px]">10:57<br />19/04/2021</time>
      <button type="button" aria-label="Notifications" className="flex w-9 items-center justify-center">
        <Icon><path d="M1.500 2.500h15v11h-4.500L9 16.500 6.500 13.500h-5z" stroke="#111" strokeWidth="1.200" /></Icon>
      </button>
      <span className="mr-[3px] ml-[10px] h-10 w-px bg-[#a4b0c4]" />
    </div>
  );
}

export default function App() {
  return (
    <div className="flex min-h-screen flex-col bg-[#efefef] font-['Roboto','Segoe_UI',sans-serif] text-black">
      <TitleBar />
      <MenuBar />
      <MainToolbar />
      <LineToolbar />
      <Chart />
      <ChartTabs />
      <StatusBar />
      <Taskbar />
    </div>
  );
}
